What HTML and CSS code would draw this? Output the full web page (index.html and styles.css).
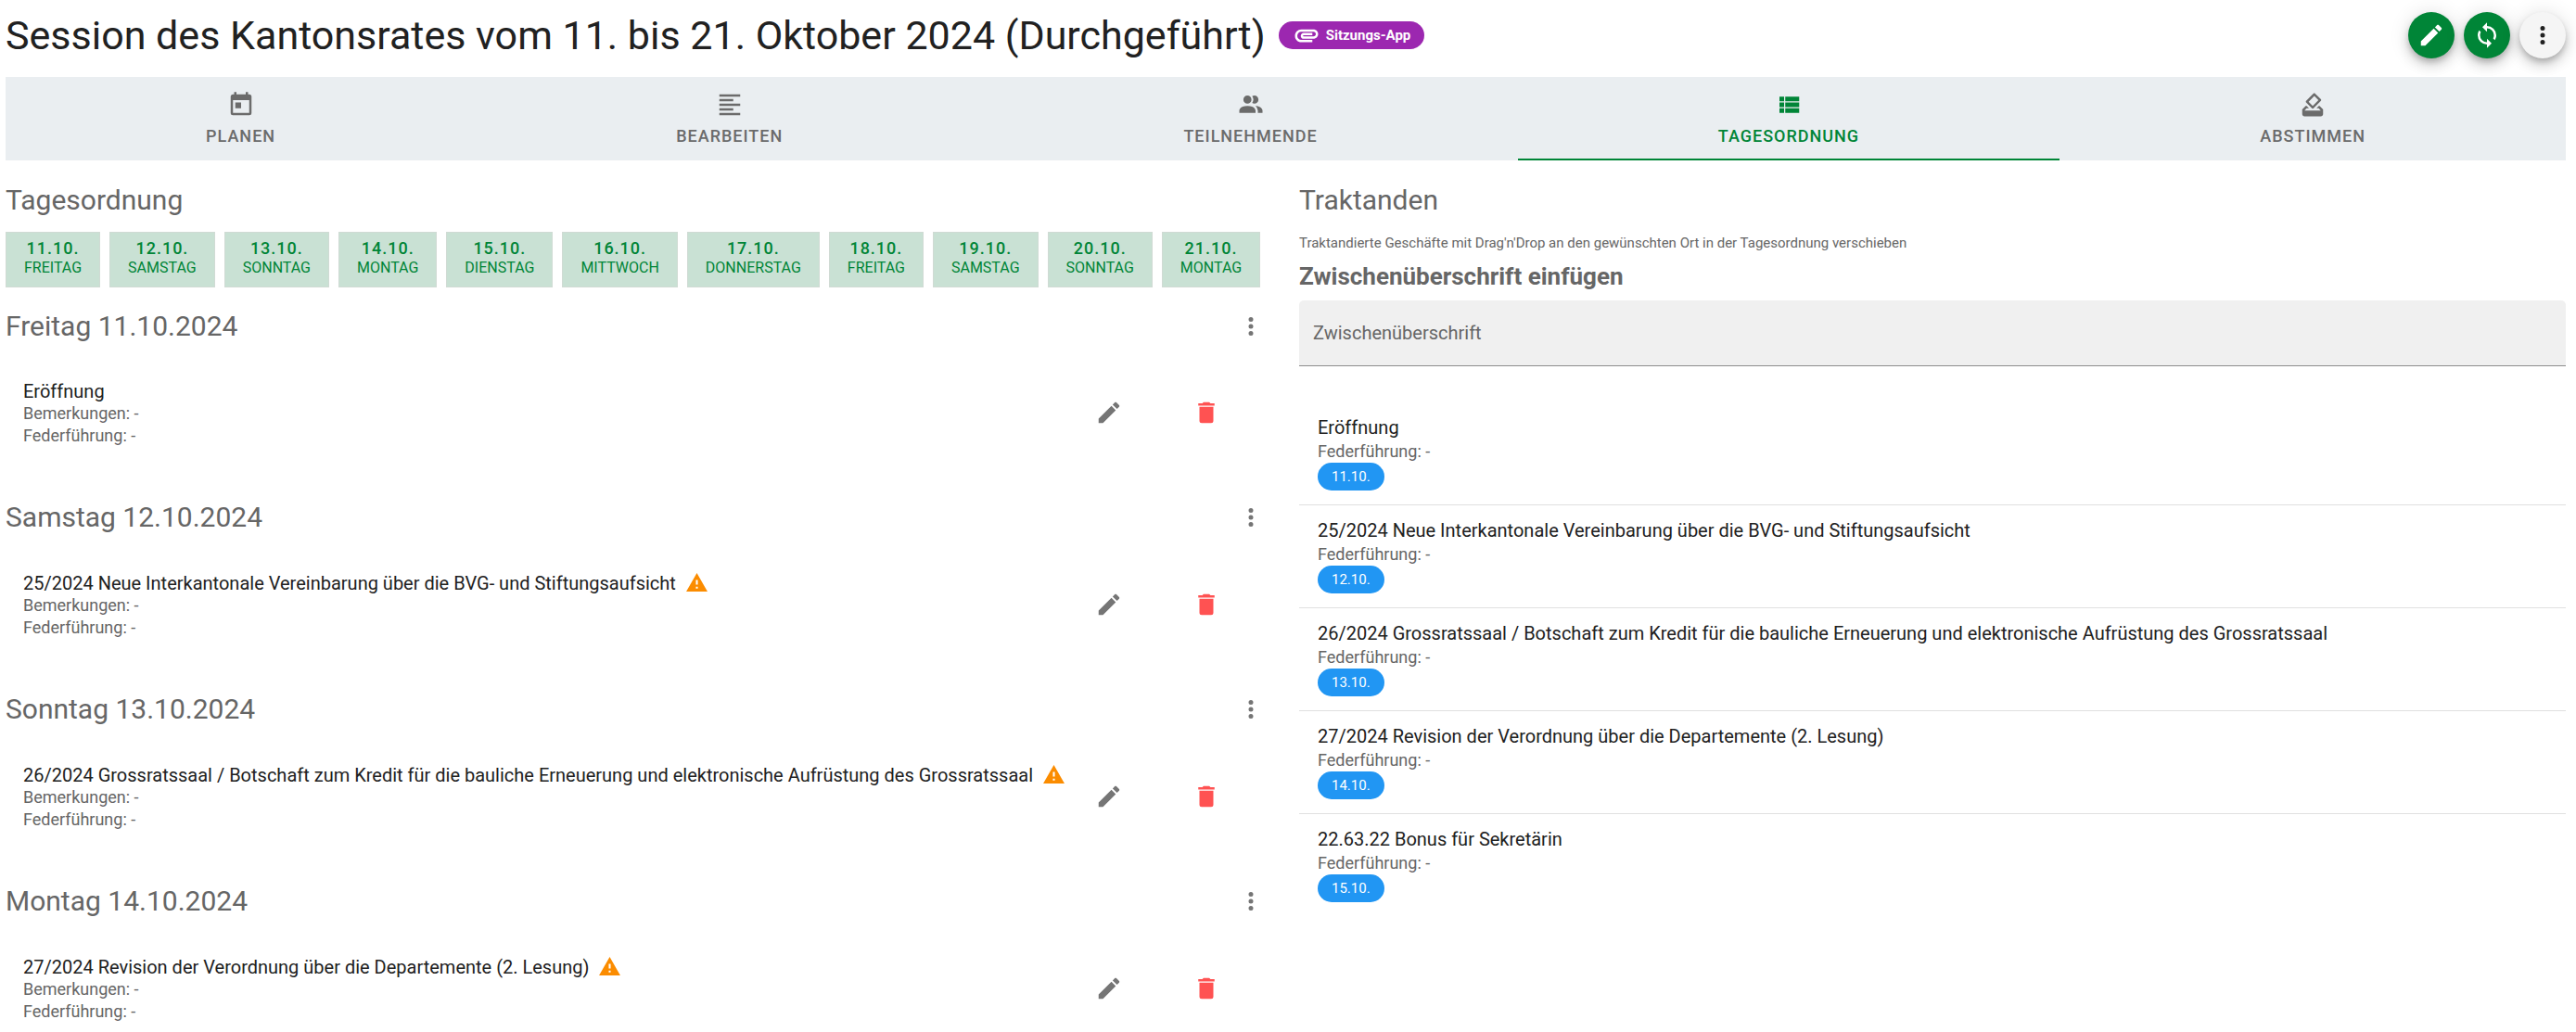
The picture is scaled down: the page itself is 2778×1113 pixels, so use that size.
FILE: index.html
```html
<!DOCTYPE html>
<html lang="de">
<head>
<meta charset="utf-8">
<meta name="viewport" content="width=device-width, initial-scale=1">
<title>Session des Kantonsrates</title>
<link rel="stylesheet" href="styles.css">
</head>
<body>
<svg class="sprite" aria-hidden="true">
  <symbol id="pencil" viewBox="0 0 24 24"><path d="M20.71,7.04C21.1,6.65 21.1,6 20.71,5.63L18.37,3.29C18,2.9 17.35,2.9 16.96,3.29L15.12,5.12L18.87,8.87M3,17.25V21H6.75L17.81,9.93L14.06,6.18L3,17.25Z"/></symbol>
  <symbol id="delete" viewBox="0 0 24 24"><path d="M19,4H15.5L14.5,3H9.5L8.5,4H5V6H19M6,19A2,2 0 0,0 8,21H16A2,2 0 0,0 18,19V7H6V19Z"/></symbol>
  <symbol id="dots" viewBox="0 0 24 24"><path d="M12,16A2,2 0 0,1 14,18A2,2 0 0,1 12,20A2,2 0 0,1 10,18A2,2 0 0,1 12,16M12,10A2,2 0 0,1 14,12A2,2 0 0,1 12,14A2,2 0 0,1 10,12A2,2 0 0,1 12,10M12,4A2,2 0 0,1 14,6A2,2 0 0,1 12,8A2,2 0 0,1 10,6A2,2 0 0,1 12,4Z"/></symbol>
  <symbol id="sync" viewBox="0 0 24 24"><path d="M12,18A6,6 0 0,1 6,12C6,11 6.25,10.03 6.7,9.2L5.24,7.74C4.46,8.97 4,10.43 4,12A8,8 0 0,0 12,20V23L16,19L12,15M12,4V1L8,5L12,9V6A6,6 0 0,1 18,12C18,13 17.75,13.97 17.3,14.8L18.76,16.26C19.54,15.03 20,13.57 20,12A8,8 0 0,0 12,4Z"/></symbol>
  <symbol id="alert" viewBox="0 0 24 24"><path d="M13,14H11V9H13M13,18H11V16H13M1,21H23L12,2L1,21Z"/></symbol>
  <symbol id="clip" viewBox="0 0 24 24"><path d="M2 12.5C2 9.46 4.46 7 7.5 7H18c2.21 0 4 1.79 4 4s-1.79 4-4 4H9.5C8.12 15 7 13.88 7 12.5S8.12 10 9.5 10H17v2H9.41c-.55 0-.55 1 0 1H18c1.1 0 2-.9 2-2s-.9-2-2-2H7.5C5.57 9 4 10.57 4 12.5S5.57 16 7.5 16H17v2H7.5C4.46 18 2 15.54 2 12.5z"/></symbol>
  <symbol id="calendar" viewBox="0 0 24 24"><path d="M7,10H12V15H7M19,19H5V8H19M19,3H18V1H16V3H8V1H6V3H5C3.89,3 3,3.9 3,5V19A2,2 0 0,0 5,21H19A2,2 0 0,0 21,19V5A2,2 0 0,0 19,3Z"/></symbol>
  <symbol id="lines" viewBox="0 0 24 24"><path d="M3,3H21V5H3V3M3,7H15V9H3V7M3,11H21V13H3V11M3,15H15V17H3V15M3,19H21V21H3V19Z"/></symbol>
  <symbol id="people" viewBox="0 0 24 24"><path d="M16,17V19H2V17S2,13 9,13 16,17 16,17M12.5,7.5A3.5,3.5 0 1,0 9,11A3.5,3.5 0 0,0 12.5,7.5M15.94,13A5.32,5.32 0 0,1 18,17V19H22V17S22,13.37 15.94,13M15,4A3.39,3.39 0 0,0 13.07,4.59A5,5 0 0,1 13.07,10.41A3.39,3.39 0 0,0 15,11A3.5,3.5 0 0,0 15,4Z"/></symbol>
  <symbol id="list" viewBox="0 0 24 24"><path d="M9,5V9H21V5M9,19H21V15H9M9,14H21V10H9M4,9H8V5H4M4,19H8V15H4M4,14H8V10H4V14Z"/></symbol>
  <symbol id="vote" viewBox="0 0 24 24"><path d="M18 13h-.68l-2 2h1.91L19 17H5l1.78-2h2.05l-2-2H6l-3 3v4c0 1.1.89 2 1.99 2H19c1.1 0 2-.89 2-2v-4l-3-3zm-1-5.05l-4.95 4.95-3.54-3.54 4.95-4.95L17 7.95zm-4.24-5.66L6.39 8.66c-.39.39-.39 1.02 0 1.41l4.95 4.95c.39.39 1.02.39 1.41 0l6.36-6.36c.39-.39.39-1.02 0-1.41L14.16 2.3c-.38-.4-1.01-.4-1.4-.01z"/></symbol>
</svg>

<header class="header">
  <h1 class="title">Session des Kantonsrates vom 11. bis 21. Oktober 2024 (Durchgeführt)</h1>
  <span class="app-chip"><svg class="icon"><use href="#clip"/></svg>Sitzungs-App</span>
  <div class="actions">
    <button class="fab" aria-label="Bearbeiten"><svg class="icon"><use href="#pencil"/></svg></button>
    <button class="fab" aria-label="Synchronisieren"><svg class="icon"><use href="#sync"/></svg></button>
    <button class="fab fab-light" aria-label="Mehr"><svg class="icon"><use href="#dots"/></svg></button>
  </div>
</header>

<nav class="tabs">
  <a class="tab" href="#planen"><svg class="icon"><use href="#calendar"/></svg>Planen</a>
  <a class="tab" href="#bearbeiten"><svg class="icon"><use href="#lines"/></svg>Bearbeiten</a>
  <a class="tab" href="#teilnehmende"><svg class="icon"><use href="#people"/></svg>Teilnehmende</a>
  <a class="tab active" href="#tagesordnung" aria-current="page"><svg class="icon"><use href="#list"/></svg>Tagesordnung</a>
  <a class="tab" href="#abstimmen"><svg class="icon"><use href="#vote"/></svg>Abstimmen</a>
</nav>

<main class="columns">
  <section class="agenda">
    <h2 class="heading">Tagesordnung</h2>
    <div class="days">
      <button class="day"><strong>11.10.</strong>Freitag</button>
      <button class="day"><strong>12.10.</strong>Samstag</button>
      <button class="day"><strong>13.10.</strong>Sonntag</button>
      <button class="day"><strong>14.10.</strong>Montag</button>
      <button class="day"><strong>15.10.</strong>Dienstag</button>
      <button class="day"><strong>16.10.</strong>Mittwoch</button>
      <button class="day"><strong>17.10.</strong>Donnerstag</button>
      <button class="day"><strong>18.10.</strong>Freitag</button>
      <button class="day"><strong>19.10.</strong>Samstag</button>
      <button class="day"><strong>20.10.</strong>Sonntag</button>
      <button class="day"><strong>21.10.</strong>Montag</button>
    </div>

    <section class="date-block">
      <div class="date-head"><h3 class="heading">Freitag 11.10.2024</h3><button class="icon-btn" aria-label="Mehr"><svg class="icon"><use href="#dots"/></svg></button></div>
      <div class="entry">
        <div class="entry-text">
          <p class="item-title">Eröffnung</p>
          <p class="meta">Bemerkungen: -</p>
          <p class="meta">Federführung: -</p>
        </div>
        <button class="icon-btn" aria-label="Bearbeiten"><svg class="icon"><use href="#pencil"/></svg></button>
        <button class="icon-btn danger" aria-label="Löschen"><svg class="icon"><use href="#delete"/></svg></button>
      </div>
    </section>

    <section class="date-block">
      <div class="date-head"><h3 class="heading">Samstag 12.10.2024</h3><button class="icon-btn" aria-label="Mehr"><svg class="icon"><use href="#dots"/></svg></button></div>
      <div class="entry">
        <div class="entry-text">
          <p class="item-title">25/2024 Neue Interkantonale Vereinbarung über die BVG- und Stiftungsaufsicht<svg class="warn"><use href="#alert"/></svg></p>
          <p class="meta">Bemerkungen: -</p>
          <p class="meta">Federführung: -</p>
        </div>
        <button class="icon-btn" aria-label="Bearbeiten"><svg class="icon"><use href="#pencil"/></svg></button>
        <button class="icon-btn danger" aria-label="Löschen"><svg class="icon"><use href="#delete"/></svg></button>
      </div>
    </section>

    <section class="date-block">
      <div class="date-head"><h3 class="heading">Sonntag 13.10.2024</h3><button class="icon-btn" aria-label="Mehr"><svg class="icon"><use href="#dots"/></svg></button></div>
      <div class="entry">
        <div class="entry-text">
          <p class="item-title">26/2024 Grossratssaal / Botschaft zum Kredit für die bauliche Erneuerung und elektronische Aufrüstung des Grossratssaal<svg class="warn"><use href="#alert"/></svg></p>
          <p class="meta">Bemerkungen: -</p>
          <p class="meta">Federführung: -</p>
        </div>
        <button class="icon-btn" aria-label="Bearbeiten"><svg class="icon"><use href="#pencil"/></svg></button>
        <button class="icon-btn danger" aria-label="Löschen"><svg class="icon"><use href="#delete"/></svg></button>
      </div>
    </section>

    <section class="date-block">
      <div class="date-head"><h3 class="heading">Montag 14.10.2024</h3><button class="icon-btn" aria-label="Mehr"><svg class="icon"><use href="#dots"/></svg></button></div>
      <div class="entry">
        <div class="entry-text">
          <p class="item-title">27/2024 Revision der Verordnung über die Departemente (2. Lesung)<svg class="warn"><use href="#alert"/></svg></p>
          <p class="meta">Bemerkungen: -</p>
          <p class="meta">Federführung: -</p>
        </div>
        <button class="icon-btn" aria-label="Bearbeiten"><svg class="icon"><use href="#pencil"/></svg></button>
        <button class="icon-btn danger" aria-label="Löschen"><svg class="icon"><use href="#delete"/></svg></button>
      </div>
    </section>
  </section>

  <section class="topics">
    <h2 class="heading">Traktanden</h2>
    <p class="hint">Traktandierte Geschäfte mit Drag'n'Drop an den gewünschten Ort in der Tagesordnung verschieben</p>
    <h3 class="subheading">Zwischenüberschrift einfügen</h3>
    <input class="field" type="text" placeholder="Zwischenüberschrift" aria-label="Zwischenüberschrift">
    <ul class="topic-list">
      <li class="topic"><p class="item-title">Eröffnung</p><p class="meta">Federführung: -</p><span class="date-chip">11.10.</span></li>
      <li class="topic"><p class="item-title">25/2024 Neue Interkantonale Vereinbarung über die BVG- und Stiftungsaufsicht</p><p class="meta">Federführung: -</p><span class="date-chip">12.10.</span></li>
      <li class="topic"><p class="item-title">26/2024 Grossratssaal / Botschaft zum Kredit für die bauliche Erneuerung und elektronische Aufrüstung des Grossratssaal</p><p class="meta">Federführung: -</p><span class="date-chip">13.10.</span></li>
      <li class="topic"><p class="item-title">27/2024 Revision der Verordnung über die Departemente (2. Lesung)</p><p class="meta">Federführung: -</p><span class="date-chip">14.10.</span></li>
      <li class="topic"><p class="item-title">22.63.22 Bonus für Sekretärin</p><p class="meta">Federführung: -</p><span class="date-chip">15.10.</span></li>
    </ul>
  </section>
</main>
</body>
</html>
```
FILE: styles.css
```css
:root {
  --green: #008537;
  --text: #212121;
  --muted: #666;
  --icon: #757575;
}

* { box-sizing: border-box; }

body {
  margin: 0;
  padding: 0 11px 0 6px;
  background: #fff;
  color: var(--text);
  font-family: Roboto, "Liberation Sans", sans-serif;
  font-size: 20px;
}

h1, h2, h3, p, ul { margin: 0; padding: 0; font-weight: 400; }
ul { list-style: none; }
button { margin: 0; border: 0; font: inherit; cursor: pointer; }

.sprite { display: none; }
.icon { display: block; flex: none; width: 30px; height: 30px; fill: currentColor; }

/* Header */
.header { display: flex; align-items: center; padding: 13px 0 20px; }
.title { font-size: 43px; line-height: 50px; }
.app-chip {
  display: flex;
  align-items: center;
  gap: 6px;
  height: 30px;
  margin-left: 14px;
  padding: 0 15px;
  border-radius: 15px;
  background: #9c27b0;
  color: #fff;
  font-size: 15px;
  font-weight: 700;
}
.actions { display: flex; gap: 10px; margin-left: auto; }
.fab {
  display: flex;
  align-items: center;
  justify-content: center;
  width: 50px;
  height: 50px;
  padding: 0;
  border-radius: 50%;
  background: var(--green);
  color: #fff;
  box-shadow: 0 4px 6px -1px rgba(0, 0, 0, .2), 0 8px 13px rgba(0, 0, 0, .14), 0 1px 22px rgba(0, 0, 0, .12);
}
.fab-light { background: #f5f5f5; color: var(--text); }

/* Tabs */
.tabs { position: relative; display: flex; background: #eaeef1; }
.tab {
  display: flex;
  flex: 1 1 auto;
  flex-direction: column;
  align-items: center;
  gap: 8px;
  height: 90px;
  padding: 15px 20px 0;
  border-bottom: 2px solid transparent;
  color: #6b6b6b;
  font-size: 18px;
  font-weight: 500;
  line-height: 22px;
  letter-spacing: 1px;
  text-transform: uppercase;
  text-decoration: none;
}
.tab.active { border-color: var(--green); color: var(--green); }

/* Columns */
.columns { display: grid; grid-template-columns: 1fr 1fr; gap: 29px; padding-top: 25px; }
.agenda, .topics { min-width: 0; }
.heading { color: var(--muted); font-size: 30px; line-height: 36px; }

.days { display: flex; flex-wrap: wrap; gap: 10px; margin-top: 16px; }
.day {
  display: flex;
  flex-direction: column;
  align-items: center;
  height: 60px;
  padding: 6px 19px 0;
  border: 1px solid #d0dbd4;
  background: #c9e1d4;
  color: var(--green);
  font-size: 16px;
  line-height: 20px;
  text-transform: uppercase;
}
.day strong { font-size: 18px; font-weight: 500; line-height: 22px; letter-spacing: 1px; }

.date-block { padding-top: 17px; }
.date-head { display: flex; align-items: center; justify-content: space-between; height: 50px; padding-right: 8px; }
.icon-btn { display: block; padding: 0; background: none; color: var(--icon); }
.entry { display: flex; align-items: center; margin: 18px 56px 21px 19px; padding: 13px 0; }
.entry-text { flex: 1; min-width: 0; padding-top: 2px; }
.entry .icon-btn + .icon-btn { margin-left: 75px; }
.danger { color: #ff5252; }

.item-title { display: flex; align-items: center; line-height: 24px; }
.meta { color: var(--muted); font-size: 18px; line-height: 24px; }
.warn { flex: none; width: 25px; height: 25px; margin-left: 10px; fill: #fb8c00; }

/* Topics */
.hint { margin-top: 16px; color: var(--muted); font-size: 15px; line-height: 24px; }
.subheading { margin-top: 8px; color: var(--muted); font-size: 26px; font-weight: 700; line-height: 32px; }
.field {
  display: block;
  width: 100%;
  height: 71px;
  margin-top: 10px;
  padding: 0 15px;
  border: 0;
  border-bottom: 1px solid #8d8d8d;
  border-radius: 5px 5px 0 0;
  background: #f0f0f0;
  color: var(--text);
  font: inherit;
}
.field::placeholder { color: var(--muted); opacity: 1; }
.topic-list { margin-top: 38px; }
.topic {
  display: flex;
  flex-direction: column;
  align-items: flex-start;
  height: 111px;
  padding: 14px 20px 0;
  border-top: 1px solid transparent;
}
.topic + .topic { border-color: #e0e0e0; }
.topic .item-title { line-height: 26px; }
.topic .meta { line-height: 25px; }
.date-chip {
  height: 30px;
  padding: 0 15px;
  border-radius: 15px;
  background: #2196f3;
  color: #fff;
  font-size: 15px;
  line-height: 30px;
}
```
